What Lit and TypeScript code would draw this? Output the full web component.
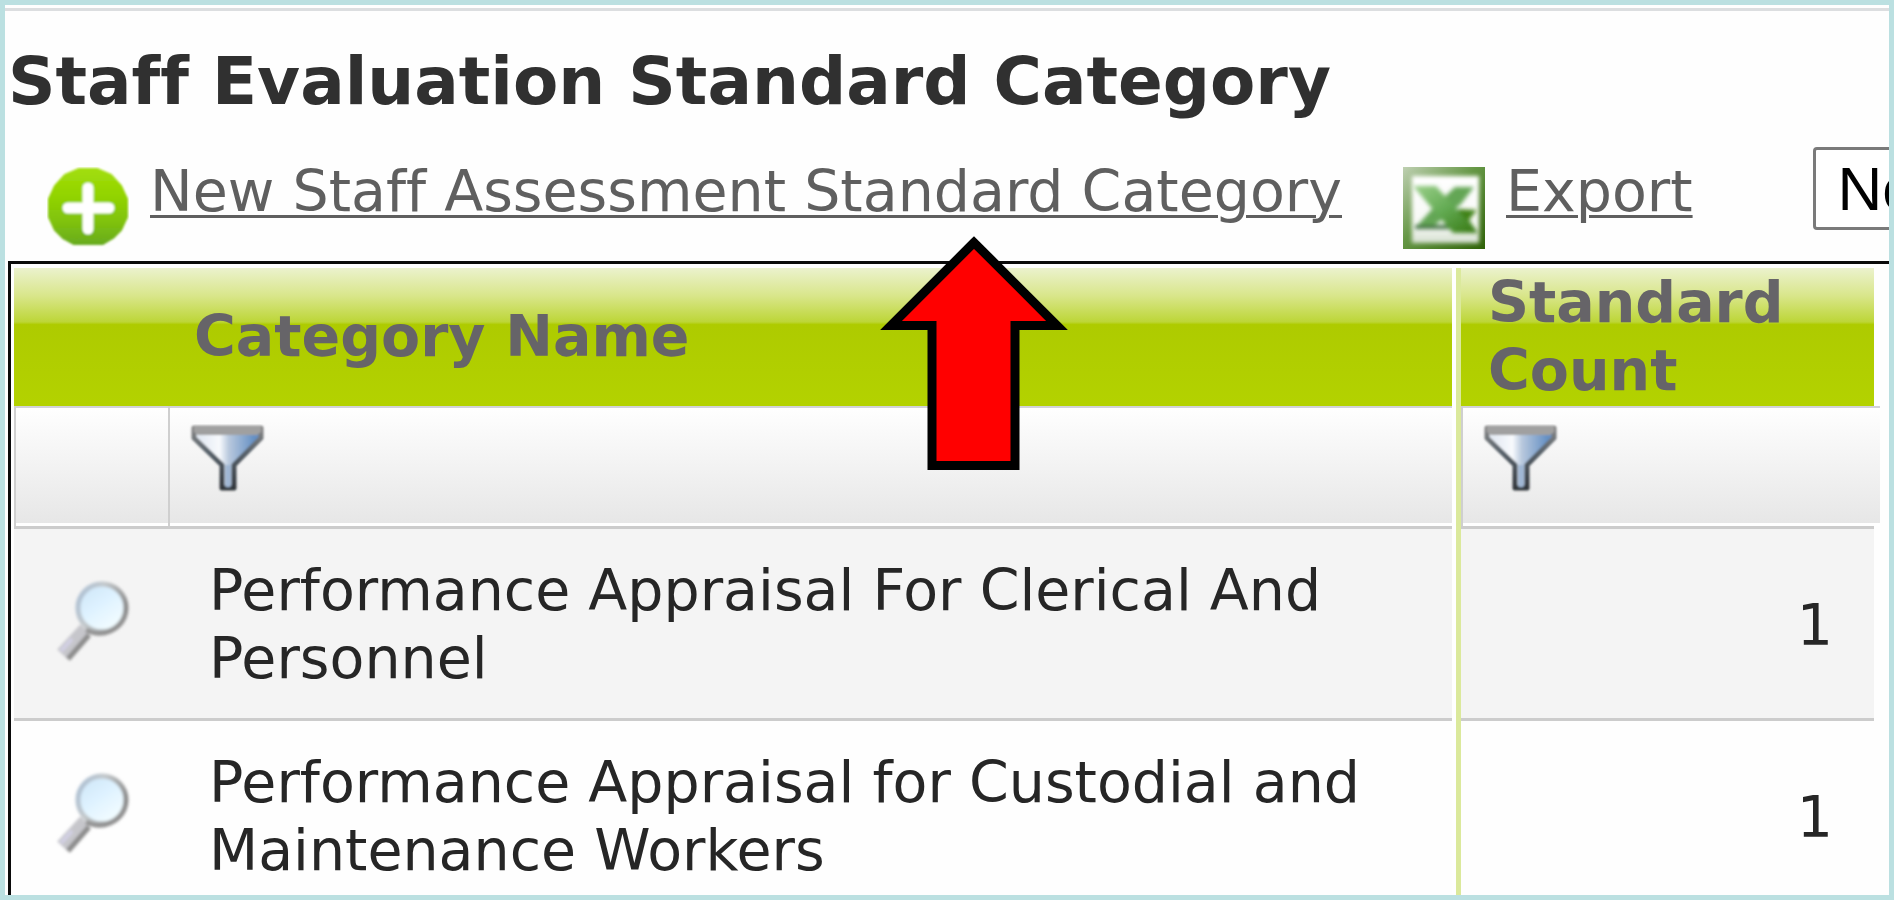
import { LitElement, html, css, svg } from "lit";
import { customElement, property } from "lit/decorators.js";

interface Category {
  name: string;
  count: number;
}

const categories: Category[] = [
  { name: "Performance Appraisal For Clerical And Personnel", count: 1 },
  { name: "Performance Appraisal for Custodial and Maintenance Workers", count: 1 },
];

const plusIcon = svg`
  <defs>
    <linearGradient id="plus-fill" x1="0" y1="0" x2="0" y2="1">
      <stop offset="0" stop-color="#a2de0a" />
      <stop offset="0.4" stop-color="#90d202" />
      <stop offset="0.7" stop-color="#80c20c" />
      <stop offset="1" stop-color="#68ac1e" />
    </linearGradient>
    <filter id="plus-soft"><feGaussianBlur stdDeviation="1" /></filter>
  </defs>
  <g filter="url(#plus-soft)">
    <path d="M32 2H50L64 8L74 19L80 32V50L74 63L66 71L56 77H27L16 71L8 63L2 50V32L8 19L18 8Z" stroke="url(#plus-fill)" stroke-width="2" stroke-linejoin="round" fill="url(#plus-fill)" />
    <path d="M41 21V62M21 41H62" stroke="#fff" stroke-width="11" stroke-linecap="round" />
  </g>`;

const excelIcon = svg`
  <defs>
    <linearGradient id="xl-frame" x1="0" y1="0" x2="1" y2="1">
      <stop offset="0" stop-color="#bfd0b2" />
      <stop offset="0.45" stop-color="#659745" />
      <stop offset="1" stop-color="#2f6208" />
    </linearGradient>
    <linearGradient id="xl-light" x1="0" y1="0" x2="1" y2="1">
      <stop offset="0" stop-color="#9bd08a" />
      <stop offset="0.5" stop-color="#62aa52" />
      <stop offset="1" stop-color="#35760f" />
    </linearGradient>
    <linearGradient id="xl-page" x1="0" y1="0" x2="0" y2="1">
      <stop offset="0" stop-color="#fff" />
      <stop offset="0.75" stop-color="#f6f8f5" />
      <stop offset="1" stop-color="#d5dfd0" />
    </linearGradient>
    <filter id="xl-soft"><feGaussianBlur stdDeviation="2" /></filter>
  </defs>
  <rect width="82" height="82" fill="url(#xl-frame)" />
  <rect x="9" y="9" width="67" height="67" fill="url(#xl-page)" filter="url(#xl-soft)" />
  <g filter="url(#xl-soft)">
    <path d="M52 20H71L58 37L46 47L28 61H12L32 39Z" fill="#63a654" />
    <path d="M12 58H48V62H12Z" fill="#3f7040" />
    <path d="M55 42L74 43L66 53L75 66H52Z" fill="#3f8218" />
    <path d="M10 19H33L75 66H50Z" fill="url(#xl-light)" />
  </g>`;

const funnelIcon = svg`
  <defs>
    <linearGradient id="funnel-fill" x1="0" y1="0" x2="1" y2="0">
      <stop offset="0.1" stop-color="#e4eaf3" />
      <stop offset="0.38" stop-color="#f8fafd" />
      <stop offset="0.52" stop-color="#b8c8dd" />
      <stop offset="0.9" stop-color="#6590c4" />
    </linearGradient>
    <linearGradient id="funnel-edge" x1="0" y1="0" x2="0" y2="1">
      <stop offset="0" stop-color="#858585" />
      <stop offset="0.4" stop-color="#59636c" />
      <stop offset="1" stop-color="#33383d" />
    </linearGradient>
    <filter id="funnel-soft" x="-10%" y="-10%" width="120%" height="120%"><feGaussianBlur stdDeviation="1.3" /></filter>
  </defs>
  <g filter="url(#funnel-soft)">
    <path d="M5 4H72V14L45 41V64H33V41L5 14Z" fill="url(#funnel-fill)" stroke="url(#funnel-edge)" stroke-width="5" stroke-linejoin="round" />
    <path d="M5 2H72V8L68 11H9L5 8Z" fill="#a0a0a0" />
    <path d="M39 41V63" stroke="#9fb6d3" stroke-width="5" />
  </g>`;

const lensIcon = svg`
  <defs>
    <linearGradient id="lens-fill" x1="0" y1="0" x2="0.7" y2="1">
      <stop offset="0" stop-color="#cbe3f6" />
      <stop offset="0.5" stop-color="#def2ff" />
      <stop offset="1" stop-color="#f4fdff" />
    </linearGradient>
    <linearGradient id="lens-rim" x1="0" y1="0" x2="1" y2="0.5">
      <stop offset="0" stop-color="#a9bfd6" />
      <stop offset="0.45" stop-color="#c3c8cb" />
      <stop offset="1" stop-color="#8a8a8a" />
    </linearGradient>
    <filter id="lens-soft" x="-10%" y="-10%" width="120%" height="120%"><feGaussianBlur stdDeviation="1.5" /></filter>
  </defs>
  <g filter="url(#lens-soft)">
    <path d="M7 75L30 50" stroke="#c6c6cb" stroke-width="13" />
    <path d="M13 80L34 56" stroke="#8c8c8c" stroke-width="5" />
    <path d="M6 72L17 60" stroke="#d2d0e4" stroke-width="4" />
    <circle cx="47" cy="29" r="24" fill="url(#lens-fill)" stroke="url(#lens-rim)" stroke-width="5" />
    <path d="M31 51C47 60 66 52 71 33" fill="none" stroke="#919191" stroke-width="4" />
  </g>`;

@customElement("app-icon")
class AppIcon extends LitElement {
  @property() name = "plus";

  static styles = css`
    :host { display: block; flex: none; }
    .icon { display: block; }
  `;

  render() {
    switch (this.name) {
      case "excel":
        return html`<svg class="icon" width="82" height="82" viewBox="0 0 82 82" aria-hidden="true">${excelIcon}</svg>`;
      case "funnel":
        return html`<svg class="icon" width="78" height="69" viewBox="0 0 78 69" aria-hidden="true">${funnelIcon}</svg>`;
      case "lens":
        return html`<svg class="icon" width="78" height="84" viewBox="0 0 78 84" aria-hidden="true">${lensIcon}</svg>`;
      default:
        return html`<svg class="icon" width="82" height="80" viewBox="0 0 82 80" fill="none" aria-hidden="true">${plusIcon}</svg>`;
    }
  }
}

@customElement("app-root")
class AppRoot extends LitElement {
  static styles = css`
    :host {
      display: block;
      font-family: Verdana, "DejaVu Sans", sans-serif;
      font-size: 57px;
      line-height: 68px;
      font-variant-ligatures: none;
      color: #262626;
    }
    .frame {
      position: relative;
      box-sizing: border-box;
      height: 100vh;
      overflow: hidden;
      border: 5px solid #bbe0e1;
      background: #fefefe;
      padding-top: 3px;
      display: flex;
      flex-direction: column;
    }
    .title {
      flex: none;
      margin: 0;
      border-top: 3px solid #dcdee0;
      padding: 30px 0 24px 3px;
      font-size: 66px;
      line-height: 82px;
      font-weight: bold;
      color: #303030;
      white-space: nowrap;
    }
    .toolbar {
      flex: none;
      display: flex;
      align-items: flex-start;
      padding: 0 0 12px 42px;
      white-space: nowrap;
    }
    .tool-icon { margin-top: 20px; }
    .link {
      flex: none;
      margin-top: 10px;
      color: #5f5f5f;
      text-decoration-line: underline;
      text-decoration-thickness: 3px;
      text-underline-offset: 4px;
    }
    .new { margin-left: 21px; margin-right: 61px; }
    .export { margin-left: 21px; margin-right: 120px; }
    .view {
      flex: none;
      box-sizing: border-box;
      width: 400px;
      height: 83px;
      margin: 0;
      padding: 0 0 0 22px;
      appearance: none;
      border: 3px solid #7a7a7a;
      border-radius: 4px;
      background: #fff;
      color: #000;
      font: 62px/72px "Liberation Sans", Arial, sans-serif;
    }
    .grid-box {
      flex: none;
      margin-left: 3px;
      border: solid #0a0a0a;
      border-width: 3px 0 0 3px;
      padding: 4px 9px 0 3px;
    }
    .grid {
      width: 100%;
      table-layout: fixed;
      border-collapse: separate;
      border-spacing: 0;
    }
    .col-action { width: 154px; }
    .col-count { width: 424px; }
    .grid th, .grid td {
      box-sizing: border-box;
      padding: 0;
      text-align: left;
      vertical-align: middle;
      background-clip: padding-box;
    }
    .grid .name { border-right: 4px solid #fff; }
    .grid .count { border-left: 5px solid #dbe99c; border-right: 6px solid #fefefe; }
    .head th {
      height: 138px;
      color: #666468;
      background-image: linear-gradient(#ebf2cd 0, #d9e68b 20%, #bdd638 39%, #aecb00 41%, #b3d200 100%);
      background-origin: padding-box;
    }
    .grid .head .name { padding: 0 0 2px 26px; }
    .grid .head .count { padding: 0 0 2px 27px; }
    .filters td {
      height: 120px;
      background-image: linear-gradient(#fff, #fff), linear-gradient(#fff, #e6e6e6);
      background-size: 100% 3px, 100% 100%;
      background-position: 0 100%, 0 0;
      background-repeat: no-repeat;
      box-shadow: inset 2px 0 #cfcfcf, inset 0 2px #d2d2d8;
    }
    .grid .filters .count { border-right: 0; }
    .filter {
      display: block;
      margin: 0 0 16px 21px;
      padding: 0;
      border: 0;
      background: none;
    }
    .row td {
      height: 192px;
      box-shadow: inset 0 3px #cccccc;
    }
    .row:nth-child(odd) td { background-color: #f4f4f4; }
    .grid .row .name { padding: 4px 40px 0 41px; }
    .grid .row .count { padding: 6px 41px 0 0; text-align: right; }
    .open { display: block; width: 78px; margin: 0 0 2px 41px; }
    .pointer {
      position: absolute;
      left: 870px;
      top: 226px;
      display: block;
      pointer-events: none;
    }
  `;

  render() {
    return html`
      <main class="frame">
        <h1 class="title">Staff Evaluation Standard Category</h1>
        <div class="toolbar">
          <app-icon class="tool-icon" name="plus"></app-icon>
          <a class="link new" href="#new">New Staff Assessment Standard Category</a>
          <app-icon class="tool-icon" name="excel"></app-icon>
          <a class="link export" href="#export">Export</a>
          <select class="view" aria-label="View">
            <option>No</option>
          </select>
        </div>
        <div class="grid-box">
          <table class="grid">
            <colgroup>
              <col class="col-action" />
              <col />
              <col class="col-count" />
            </colgroup>
            <thead>
              <tr class="head">
                <th></th>
                <th class="name" scope="col">Category Name</th>
                <th class="count" scope="col">Standard Count</th>
              </tr>
              <tr class="filters">
                <td></td>
                <td class="name">
                  <button class="filter" aria-label="Filter by name"><app-icon name="funnel"></app-icon></button>
                </td>
                <td class="count">
                  <button class="filter" aria-label="Filter by count"><app-icon name="funnel"></app-icon></button>
                </td>
              </tr>
            </thead>
            <tbody>
              ${categories.map(
                (c) => html`
                  <tr class="row">
                    <td><a class="open" href="#view" aria-label="View"><app-icon name="lens"></app-icon></a></td>
                    <td class="name">${c.name}</td>
                    <td class="count">${c.count}</td>
                  </tr>
                `,
              )}
            </tbody>
          </table>
        </div>
        <svg class="pointer" width="196" height="240" viewBox="0 0 196 240" aria-hidden="true">
          <path d="M99 11.500L16 94.500H57V234.500H140V94.500H182Z" fill="#f00" stroke="#000" stroke-width="9" stroke-miterlimit="10" />
        </svg>
      </main>
    `;
  }
}
